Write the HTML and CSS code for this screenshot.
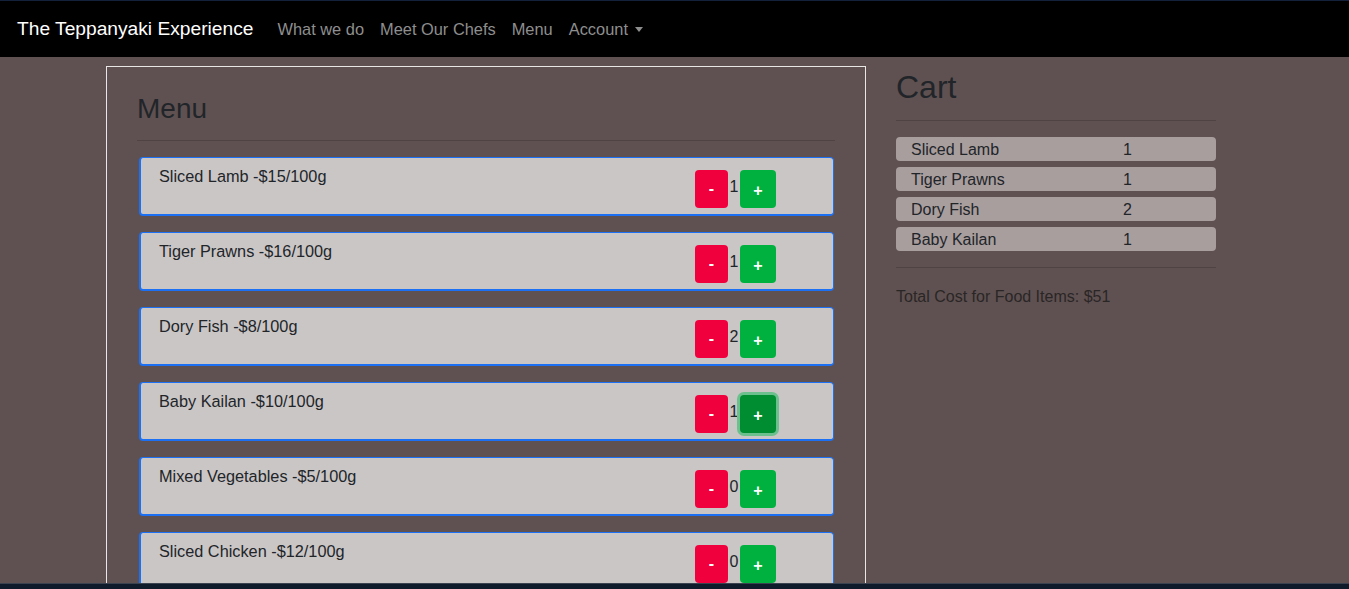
FILE: index.html
```html
<!DOCTYPE html>
<html lang="en">
<head>
<meta charset="utf-8">
<title>The Teppanyaki Experience</title>
<link rel="stylesheet" href="styles.css">
</head>
<body>
<nav class="navbar">
  <a class="brand" href="#">The Teppanyaki Experience</a>
  <ul class="nav">
    <li><a href="#">What we do</a></li>
    <li><a href="#">Meet Our Chefs</a></li>
    <li><a href="#">Menu</a></li>
    <li><a href="#" class="dropdown">Account</a></li>
  </ul>
</nav>
<main class="container">
  <section class="menu-box">
    <h3 class="menu-title">Menu</h3>
    <hr class="rule">
    <div class="item">
      <div class="item-name">Sliced Lamb -$15/100g</div>
      <div class="qty"><button class="btn minus">-</button><span class="count">1</span><button class="btn plus">+</button></div>
    </div>
    <div class="item">
      <div class="item-name">Tiger Prawns -$16/100g</div>
      <div class="qty"><button class="btn minus">-</button><span class="count">1</span><button class="btn plus">+</button></div>
    </div>
    <div class="item">
      <div class="item-name">Dory Fish -$8/100g</div>
      <div class="qty"><button class="btn minus">-</button><span class="count">2</span><button class="btn plus">+</button></div>
    </div>
    <div class="item">
      <div class="item-name">Baby Kailan -$10/100g</div>
      <div class="qty"><button class="btn minus">-</button><span class="count">1</span><button class="btn plus focused">+</button></div>
    </div>
    <div class="item">
      <div class="item-name">Mixed Vegetables -$5/100g</div>
      <div class="qty"><button class="btn minus">-</button><span class="count">0</span><button class="btn plus">+</button></div>
    </div>
    <div class="item">
      <div class="item-name">Sliced Chicken -$12/100g</div>
      <div class="qty"><button class="btn minus">-</button><span class="count">0</span><button class="btn plus">+</button></div>
    </div>
  </section>
  <aside class="cart">
    <h2 class="cart-title">Cart</h2>
    <hr class="rule cart-rule">
    <div class="cart-list">
      <div class="cart-row"><span class="cart-name">Sliced Lamb</span><span class="cart-qty">1</span></div>
      <div class="cart-row"><span class="cart-name">Tiger Prawns</span><span class="cart-qty">1</span></div>
      <div class="cart-row"><span class="cart-name">Dory Fish</span><span class="cart-qty">2</span></div>
      <div class="cart-row"><span class="cart-name">Baby Kailan</span><span class="cart-qty">1</span></div>
    </div>
    <hr class="rule total-rule">
    <p class="total">Total Cost for Food Items: $51</p>
  </aside>
</main>
<div class="desktop-strip"></div>
</body>
</html>
```
FILE: styles.css
```css
* { box-sizing: border-box; }
html, body { height: 100%; }
body {
  margin: 0;
  background: #5f5151;
  font-family: "Liberation Sans", Arial, sans-serif;
  font-size: 16px;
  line-height: 24px;
  color: #212529;
  overflow: hidden;
}
.navbar {
  height: 57px;
  background: #000;
  border-top: 1px solid #13223a;
  display: flex;
  align-items: center;
  padding: 0 16px 0 17px;
}
.brand {
  color: #fff;
  text-decoration: none;
  font-size: 19.2px;
  line-height: 30px;
  margin-right: 16px;
}
.nav {
  list-style: none;
  margin: 0;
  padding: 0;
  display: flex;
}
.nav a {
  display: block;
  padding: 8px;
  color: #8e8e8e;
  text-decoration: none;
  font-size: 16.4px;
}
.dropdown::after {
  content: "";
  display: inline-block;
  margin-left: 7px;
  vertical-align: 3px;
  border-top: 5px solid #8e8e8e;
  border-left: 4.5px solid transparent;
  border-right: 4.5px solid transparent;
}
.container {
  width: 1137px;
  margin: 9px auto 0;
  display: flex;
  gap: 30px;
}
.menu-box {
  width: 760px;
  flex: none;
  border: 1px solid #e9e6e6;
  border-bottom: none;
  padding: 24px 30px 0;
  height: 560px;
}
.menu-title {
  margin: 0;
  font-size: 28px;
  font-weight: 400;
  line-height: 36px;
}
.rule {
  border: 0;
  border-top: 1px solid #504343;
  margin: 13px 0 16px;
}
.item {
  display: flex;
  align-items: flex-start;
  height: 59px;
  margin: 0 1px 16px 2px;
  background: #cbc6c6;
  border: 1px solid #1b70f4;
  border-bottom-width: 2px;
  border-left-width: 2px;
  border-radius: 4px;
}
.item-name {
  width: 554px;
  padding: 6px 0 0 18px;
  font-size: 16.3px;
}
.qty {
  display: flex;
  align-items: center;
  margin-top: 12px;
}
.btn {
  border: 0;
  border-radius: 4px;
  height: 38px;
  color: #fff;
  font-family: "Liberation Sans", Arial, sans-serif;
  font-size: 16px;
  font-weight: 700;
  padding: 0;
}
.minus { width: 33px; background: #f0003c; }
.plus { width: 36px; background: #00b140; padding-top: 3px; }
.count {
  margin: -4px 1.5px 0 1.5px;
  color: #212529;
}
.plus.focused {
  background: #008c31;
  box-shadow: 0 0 0 3px #6bc08e;
}
.cart {
  width: 320px;
  flex: none;
}
.cart-title {
  margin: 0;
  font-size: 32px;
  font-weight: 400;
  line-height: 42px;
}
.cart-rule { margin: 12px 0 16px; }
.cart-list {
  display: flex;
  flex-direction: column;
  gap: 6px;
}
.cart-row {
  display: flex;
  height: 24px;
  line-height: 25px;
  background: #a99e9e;
  border-radius: 4px;
  padding-left: 15px;
}
.cart-name { width: 212px; }
.total-rule { margin: 16px 0 16px; }
.total {
  margin: 0;
  line-height: 26px;
  color: #2a2626;
}
.desktop-strip {
  position: fixed;
  left: 0;
  right: 0;
  bottom: 0;
  height: 6px;
  background: #0f1b2b;
  border-top: 1px solid #3b4250;
}
```
